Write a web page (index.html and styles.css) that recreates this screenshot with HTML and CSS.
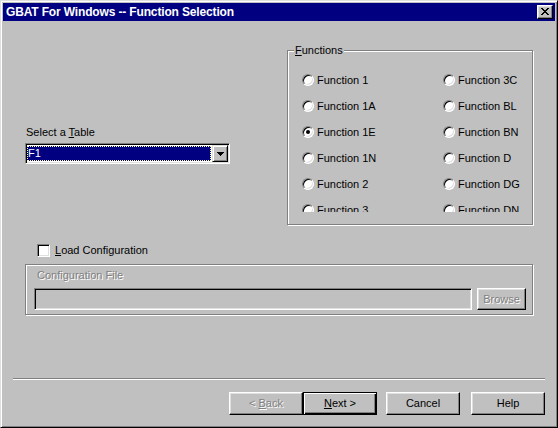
FILE: index.html
```html
<!DOCTYPE html>
<html>
<head>
<meta charset="utf-8">
<link rel="stylesheet" href="styles.css">
</head>
<body>
<div class="window">
  <div class="titlebar">
    <span class="title">GBAT For Windows -- Function Selection</span>
    <span class="close">
      <svg width="8" height="7" viewBox="0 0 8 7" shape-rendering="crispEdges"><path d="M0 0h2v1h-2z M6 0h2v1h-2z M1 1h2v1h-2z M5 1h2v1h-2z M2 2h4v1h-4z M3 3h2v1h-2z M2 4h4v1h-4z M1 5h2v1h-2z M5 5h2v1h-2z M0 6h2v1h-2z M6 6h2v1h-2z" fill="#000"/></svg>
    </span>
  </div>
  <div class="content">
    <div class="top">
      <div class="table-select">
        <div class="field-label">Select a <u>T</u>able</div>
        <div class="combo">
          <div class="combo-value"><span>F1</span></div>
          <div class="combo-btn">
            <svg width="7" height="4" viewBox="0 0 7 4" shape-rendering="crispEdges"><path d="M0 0h7v1h-7z M1 1h5v1h-5z M2 2h3v1h-3z M3 3h1v1h-1z" fill="#000"/></svg>
          </div>
        </div>
      </div>
      <div class="group functions">
        <span class="legend"><u>F</u>unctions</span>
        <div class="radio-area">
          <div class="radio-grid">
            <div class="radio-item"><span class="radio"></span><span>Function 1</span></div>
            <div class="radio-item"><span class="radio"></span><span>Function 1A</span></div>
            <div class="radio-item"><span class="radio checked"></span><span>Function 1E</span></div>
            <div class="radio-item"><span class="radio"></span><span>Function 1N</span></div>
            <div class="radio-item"><span class="radio"></span><span>Function 2</span></div>
            <div class="radio-item"><span class="radio"></span><span>Function 3</span></div>
            <div class="radio-item"><span class="radio"></span><span>Function 3C</span></div>
            <div class="radio-item"><span class="radio"></span><span>Function BL</span></div>
            <div class="radio-item"><span class="radio"></span><span>Function BN</span></div>
            <div class="radio-item"><span class="radio"></span><span>Function D</span></div>
            <div class="radio-item"><span class="radio"></span><span>Function DG</span></div>
            <div class="radio-item"><span class="radio"></span><span>Function DN</span></div>
          </div>
        </div>
      </div>
    </div>

    <div class="check-row">
      <span class="checkbox"></span>
      <span><u>L</u>oad Configuration</span>
    </div>

    <div class="group config">
      <div class="config-label disabled">Configuration File</div>
      <div class="config-row">
        <div class="textfield"></div>
        <div class="btn browse"><span class="disabled">Browse</span></div>
      </div>
    </div>

    <div class="separator"></div>

    <div class="buttons">
      <div class="btn wiz"><span class="disabled">&lt; <u>B</u>ack</span></div>
      <div class="btn wiz default"><span><u>N</u>ext &gt;</span></div>
      <div class="btn wiz cancel"><span>Cancel</span></div>
      <div class="btn wiz help"><span>Help</span></div>
    </div>
  </div>
</div>
</body>
</html>
```

FILE: styles.css
```css
* { box-sizing: border-box; }

html, body {
  margin: 0;
  padding: 0;
  background: #c0c0c0;
}

body {
  width: 558px;
  height: 428px;
  overflow: hidden;
  font-family: "Liberation Sans", Arial, sans-serif;
  font-size: 11px;
  line-height: 13px;
  color: #000;
}

.window {
  width: 558px;
  height: 428px;
  background: #c0c0c0;
  border: 1px solid;
  border-color: #dfdfdf #000 #000 #dfdfdf;
  box-shadow: inset 1px 1px 0 #fff, inset -1px -1px 0 #808080;
  padding: 2px;
  display: flex;
  flex-direction: column;
}

.titlebar {
  height: 18px;
  background: #000080;
  color: #fff;
  display: flex;
  align-items: center;
  justify-content: space-between;
  padding: 0 2px 0 3px;
  flex: none;
}

.title {
  font-weight: bold;
  font-size: 12px;
  letter-spacing: -0.15px;
  line-height: 14px;
}

.close {
  width: 16px;
  height: 14px;
  background: #c0c0c0;
  border: 1px solid;
  border-color: #fff #000 #000 #fff;
  box-shadow: inset -1px -1px 0 #808080, inset 1px 1px 0 #dfdfdf;
  display: flex;
  align-items: center;
  justify-content: center;
  padding-bottom: 1px;
}

.close svg { display: block; }

.content {
  flex: 1;
  display: flex;
  flex-direction: column;
}

/* top section */
.top {
  display: flex;
  align-items: flex-start;
  padding-top: 29px;
  flex: none;
}

.table-select {
  width: 205px;
  margin-left: 22px;
  margin-top: 76px;
}

.field-label {
  padding-left: 1px;
  margin-bottom: 4px;
}

.combo {
  height: 21px;
  background: #fff;
  border: 1px solid;
  border-color: #808080 #fff #fff #808080;
  box-shadow: inset 1px 1px 0 #000, inset -1px -1px 0 #dfdfdf;
  padding: 1px;
  display: flex;
}

.combo-value {
  flex: 1;
  margin: 1px 1px 1px 0;
  background: #000080;
  color: #fff;
  border: 1px dotted #ffff9c;
  display: flex;
  align-items: center;
  padding-left: 0;
  line-height: 13px;
}

.combo-btn {
  width: 16px;
  height: 17px;
  background: #c0c0c0;
  border: 1px solid;
  border-color: #dfdfdf #000 #000 #dfdfdf;
  box-shadow: inset 1px 1px 0 #fff, inset -1px -1px 0 #808080;
  display: flex;
  align-items: center;
  justify-content: center;
}

.combo-btn svg { display: block; }

/* etched group box */
.group {
  position: relative;
  border: 1px solid #808080;
  box-shadow: inset 1px 1px 0 #fff, 1px 1px 0 #fff;
}

.functions {
  margin-left: 57px;
  width: 246px;
  height: 175px;
}

.legend {
  position: absolute;
  top: -7px;
  left: 6px;
  padding: 0 1px;
  background: #c0c0c0;
}

.radio-area {
  margin: 16px 0 0 14px;
  height: 145px;
  overflow: hidden;
}

.radio-grid {
  display: grid;
  grid-template-columns: 141px 1fr;
  grid-template-rows: repeat(6, 26px);
  grid-auto-flow: column;
}

.radio-item {
  display: flex;
  align-items: center;
  gap: 3px;
}

.radio {
  width: 12px;
  height: 12px;
  border-radius: 50%;
  background: #fff;
  border: 1px solid;
  border-color: #808080 #fff #fff #808080;
  box-shadow: inset 1px 1px 0 #000, inset -1px -1px 0 #dfdfdf;
  position: relative;
  flex: none;
}

.radio.checked::after {
  content: "";
  position: absolute;
  left: 3px;
  top: 3px;
  width: 4px;
  height: 4px;
  border-radius: 50%;
  background: #000;
}

/* checkbox */
.check-row {
  display: flex;
  align-items: center;
  gap: 5px;
  margin: 19px 0 0 34px;
  height: 13px;
}

.checkbox {
  width: 13px;
  height: 13px;
  background: #fff;
  border: 1px solid;
  border-color: #808080 #fff #fff #808080;
  box-shadow: inset 1px 1px 0 #000, inset -1px -1px 0 #dfdfdf;
  flex: none;
}

/* configuration group */
.config {
  margin: 7px 0 0 22px;
  width: 508px;
  height: 51px;
  padding: 4px 0 0 8px;
}

.config-label {
  padding-left: 3px;
}

.config-row {
  display: flex;
  gap: 5px;
  margin-top: 6px;
}

.textfield {
  width: 438px;
  height: 22px;
  background: #c0c0c0;
  border: 1px solid;
  border-color: #808080 #fff #fff #808080;
  box-shadow: inset 1px 1px 0 #000, inset -1px -1px 0 #dfdfdf;
}

.disabled {
  color: #808080;
  text-shadow: 1px 1px 0 #fff;
}

/* buttons */
.btn {
  background: #c0c0c0;
  border: 1px solid;
  border-color: #fff #000 #000 #fff;
  box-shadow: inset -1px -1px 0 #808080, inset 1px 1px 0 #dfdfdf;
  display: flex;
  align-items: center;
  justify-content: center;
}

.browse {
  width: 49px;
  height: 22px;
}

.separator {
  margin: 63px 0 0 10px;
  width: 532px;
  height: 2px;
  border-top: 1px solid #808080;
  border-bottom: 1px solid #fff;
}

.buttons {
  display: flex;
  margin: 12px 0 0 226px;
}

.wiz {
  width: 74px;
  height: 23px;
}

.wiz.default {
  border: 1px solid #000;
  box-shadow: inset 1px 1px 0 #fff, inset -1px -1px 0 #000, inset -2px -2px 0 #808080;
}

.wiz.cancel { margin-left: 9px; }
.wiz.help { margin-left: 11px; }
```
